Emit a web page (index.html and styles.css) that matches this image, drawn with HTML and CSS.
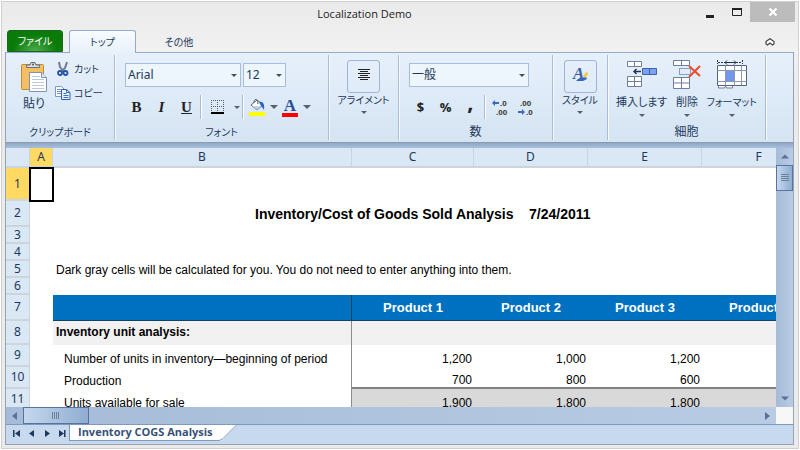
FILE: index.html
```html
<!DOCTYPE html>
<html lang="ja">
<head>
<meta charset="utf-8">
<title>Localization Demo</title>
<link rel="stylesheet" href="styles.css">
</head>
<body>
<div class="window">
  <header class="titlebar">
    <h1 class="title">Localization Demo</h1>
    <div class="window-buttons">
      <button class="win-btn" aria-label="Minimize"><svg width="10" height="12"><path d="M1 9h8v3H1z" fill="#222"/></svg></button>
      <button class="win-btn" aria-label="Maximize"><svg width="10" height="12"><path d="M0.5 3v6.500h9V3" fill="none" stroke="#222"/><path d="M0 2h10v2H0z" fill="#222"/></svg></button>
      <button class="win-btn close" aria-label="Close"><svg width="10" height="10"><path d="M1.500 1.500l7 7M8.500 1.500l-7 7" stroke="#fff" stroke-width="2"/></svg></button>
    </div>
  </header>
  <nav class="tabs">
    <button class="tab file">ファイル</button>
    <button class="tab active">トップ</button>
    <button class="tab other">その他</button>
    <button class="collapse" aria-label="Collapse ribbon"><svg width="10" height="8"><path d="M1 3.500L5 0.700L9 3.500V6L7.500 7L5 5L2.500 7L1 6z" fill="#fff" stroke="#444" stroke-width="1.200"/></svg></button>
  </nav>
  <div class="frame">
    <div class="ribbon">
      <section class="group clipboard">
        <div class="group-body row">
          <button class="big">
            <svg width="28" height="32" viewBox="0 0 28 32">
              <rect x="1.500" y="3.500" width="22" height="25" rx="1" fill="#f3bf62" stroke="#bd8b3d"/>
              <path d="M6.500 6.500V4h3.500l1-2.500h4L16 4h3.500v2.500z" fill="#d8dde3" stroke="#69717b"/>
              <circle cx="13" cy="3.500" r="1" fill="#555"/>
              <path d="M9.500 11.500h12l5 5v14h-17z" fill="#fff" stroke="#7e93b3"/>
              <path d="M21.500 11.500v5h5" fill="#dce8f6" stroke="#7e93b3"/>
              <path d="M12 15.500h8M12 18.500h12M12 21.500h12M12 24.500h12M12 27.500h12" stroke="#b9c8da"/>
            </svg>
            <span>貼り</span>
          </button>
          <div class="stack">
            <button class="small">
              <svg width="16" height="16" viewBox="0 0 16 16">
                <path d="M4 1l1 5 4 5M12 1l-2 6-4 4" fill="none" stroke="#6d7b8e" stroke-width="2"/>
                <circle cx="5" cy="12" r="2" fill="none" stroke="#2451a6" stroke-width="1.800"/>
                <circle cx="10.500" cy="12" r="2" fill="none" stroke="#2451a6" stroke-width="1.800"/>
              </svg><span>カット</span>
            </button>
            <button class="small">
              <svg width="16" height="16" viewBox="0 0 16 16">
                <path d="M.5 1.500h6l3 3v7h-9z" fill="#fff" stroke="#7b98c8"/>
                <path d="M2 4.500h4M2 6.500h4M2 8.500h4" stroke="#6e93d0"/>
                <path d="M6.500 4.500h5l3.500 3v7H6.500z" fill="#e8f1fd" stroke="#2f5fb5"/>
                <path d="M11.500 4.500v3H15M8.500 8.500h3M8.500 10.500h5M8.500 12.500h5" fill="none" stroke="#3c6ec2"/>
              </svg><span>コピー</span>
            </button>
          </div>
        </div>
        <h2 class="group-label">クリップボード</h2>
      </section>

      <section class="group font">
        <div class="group-body">
          <div class="combos">
            <div class="combo family"><select aria-label="フォント名"><option>Arial</option></select></div>
            <div class="combo size"><select aria-label="フォントサイズ"><option>12</option></select></div>
          </div>
          <div class="tools">
            <button class="tool serif" aria-label="Bold">B</button>
            <button class="tool serif italic" aria-label="Italic">I</button>
            <button class="tool serif underline" aria-label="Underline">U</button>
            <i class="divider"></i>
            <button class="tool border-tool" aria-label="Borders"><svg width="14" height="14"><path d="M.5 0v13M6.500 0v13M12.500 0v13M0 .5h13M0 6.500h13" stroke="#555e6b" stroke-dasharray="1 1"/><path d="M0 13h13" stroke="#000" stroke-width="2"/></svg></button>
            <button class="arrow" aria-label="Border options"></button>
            <i class="divider"></i>
            <button class="tool color-tool" aria-label="Fill color"><svg width="18" height="18"><path d="M3 7l6-5 6 5-6 5z" fill="#fff" stroke="#5b6470"/><path d="M6 5c0-5 4-5 4 1" fill="none" stroke="#5b6470"/><path d="M4 8l9 .5L9 12z" fill="#b9cbe2"/><path d="M11 4c4-1 6 2 5 8-1-2-2-3-3-4z" fill="#2865c4"/><path d="M1 14h16v4H1z" fill="#ff0"/></svg></button>
            <button class="arrow wide" aria-label="Fill options"></button>
            <button class="tool color-tool letter" aria-label="Font color"><span>A</span></button>
            <button class="arrow wide" aria-label="Font color options"></button>
          </div>
        </div>
        <h2 class="group-label">フォント</h2>
      </section>

      <section class="group alignment">
        <button class="gallery">
          <span class="gallery-box"><svg width="14" height="14"><path d="M1 1.500h12M3 3.500h8M1 5.500h12M3 7.500h8M1 9.500h12M3 11.500h8" stroke="#222"/></svg></span>
          <span>アライメント</span><i class="caret"></i>
        </button>
      </section>

      <section class="group number">
        <div class="group-body">
          <div class="combos">
            <div class="combo format"><select aria-label="表示形式"><option>一般</option></select></div>
          </div>
          <div class="tools">
            <button class="tool sign">$</button>
            <button class="tool sign">%</button>
            <button class="tool sign comma">,</button>
            <i class="divider"></i>
            <button class="decimal" aria-label="Increase decimal"><svg width="18" height="20"><path d="M1 6l3-3v2h4v2H4v2z" fill="#3b69bd"/><text x="9" y="9">.0</text><text x="5" y="18">.00</text></svg></button>
            <button class="decimal" aria-label="Decrease decimal"><svg width="18" height="20"><text x="3" y="9">.00</text><path d="M8 15l-3-3v2H1v2h4v2z" fill="#3b69bd"/><text x="9" y="18">.0</text></svg></button>
          </div>
        </div>
        <h2 class="group-label">数</h2>
      </section>

      <section class="group style">
        <button class="gallery">
          <span class="gallery-box"><svg width="20" height="24"><text class="style-a" x="3" y="17">A</text><path d="M8 17l5-1 2-3 2 4-4 2H6z" fill="#3568c5"/><path d="M13 14l4-5 1 4-3 3z" fill="#f4c84e"/></svg></span>
          <span>スタイル</span><i class="caret"></i>
        </button>
      </section>

      <section class="group cells">
        <div class="group-body row">
          <button class="cell-btn insert">
            <svg width="32" height="30" viewBox="0 0 32 30">
              <path d="M1.500 1.500h14v5h-14zM8.500 1.500v5M1.500 16.500h14v10h-14zM8.500 16.500v10M1.500 21.500h14" fill="#fff" stroke="#6e7f9b"/>
              <path d="M16.500 8.500h14v6h-14zM23.500 8.500v6" fill="#7ca2ee" stroke="#3c62b0"/>
              <path d="M8 11.500h7M10.500 9L8 11.500l2.500 2.500" fill="none" stroke="#26364f" stroke-width="1.500"/>
            </svg><span>挿入します</span><i class="caret"></i>
          </button>
          <button class="cell-btn delete">
            <svg width="32" height="30" viewBox="0 0 32 30">
              <path d="M2.500.5h16v5h-16zM10.500.5v5M2.500 17.500h16v11h-16zM10.500 17.500v11M2.500 23h16" fill="#fff" stroke="#6e7f9b"/>
              <path d="M8.500 8.500h11v6h-11z" fill="none" stroke="#2450a0" stroke-dasharray="1 1"/>
              <path d="M18 6l11 10M29 6L18 17" stroke="#f04a2e" stroke-width="2"/>
            </svg><span>削除</span><i class="caret"></i>
          </button>
          <button class="cell-btn format-cells">
            <svg width="32" height="30" viewBox="0 0 32 30">
              <path d="M1.500 0v4M26.500 0v4M2 2.500h24" stroke="#26364f" stroke-dasharray="2 1"/><path d="M9 2.500h11M11 .5l-2 2 2 2M18 .5l2 2-2 2" fill="none" stroke="#26364f"/>
              <path d="M2.500 26v2h6l1-2 1 2h6v-2" fill="#fff" stroke="#6e7f9b"/>
              <path d="M1.500 5.500h29v20h-29z" fill="#fff" stroke="#52637f"/>
              <path d="M9.500 5.500v20M18.500 5.500v20M25.500 5.500v20M1.500 10.500h29M1.500 21.500h29" stroke="#8b98ad"/>
              <path d="M10 11h8v10h-8z" fill="#7298ee"/>
            </svg><span>フォーマット</span><i class="caret"></i>
          </button>
        </div>
        <h2 class="group-label">細胞</h2>
      </section>
    </div>

    <main class="workarea">
      <div class="sheet">
        <table>
          <colgroup><col class="c-head"><col class="c-a"><col class="c-b"><col class="c-c"><col class="c-n"><col class="c-n"><col class="c-n"></colgroup>
          <thead><tr><th></th><th class="current">A</th><th>B</th><th>C</th><th>D</th><th>E</th><th>F</th></tr></thead>
          <tbody>
            <tr class="r1"><th class="current">1</th><td class="selected"></td><td colspan="5"></td></tr>
            <tr class="r-tall"><th>2</th><td></td><td colspan="5" class="heading">Inventory/Cost of Goods Sold Analysis &nbsp;&nbsp; 7/24/2011</td></tr>
            <tr class="r-short"><th>3</th><td></td><td colspan="5"></td></tr>
            <tr class="r-short"><th>4</th><td></td><td colspan="5"></td></tr>
            <tr class="r-short"><th>5</th><td></td><td colspan="5">Dark gray cells will be calculated for you. You do not need to enter anything into them.</td></tr>
            <tr class="r-short"><th>6</th><td></td><td colspan="5"></td></tr>
            <tr class="r-tall products"><th>7</th><td></td><td class="label"></td><td>Product 1</td><td>Product 2</td><td>Product 3</td><td>Product 4</td></tr>
            <tr class="section"><th>8</th><td></td><td class="label">Inventory unit analysis:</td><td></td><td></td><td></td><td></td></tr>
            <tr class="data"><th>9</th><td></td><td class="label">Number of units in inventory—beginning of period</td><td>1,200</td><td>1,000</td><td>1,200</td><td></td></tr>
            <tr class="data last"><th>10</th><td></td><td class="label">Production</td><td>700</td><td>800</td><td>600</td><td></td></tr>
            <tr class="data total"><th>11</th><td></td><td class="label">Units available for sale</td><td>1,900</td><td>1,800</td><td>1,800</td><td></td></tr>
          </tbody>
        </table>
      </div>
      <div class="vscroll">
        <button aria-label="Scroll up"><svg width="8" height="5"><path d="M0 4.500L4 .5l4 4z" fill="#5c6f9c"/></svg></button>
        <div class="vthumb"><svg width="8" height="8"><path d="M0 .5h8M0 2.500h8M0 4.500h8M0 6.500h8" stroke="#6b7f95"/></svg></div>
        <button class="end" aria-label="Scroll down"><svg width="8" height="5"><path d="M0 .5h8l-4 4z" fill="#5c6f9c"/></svg></button>
      </div>
    </main>
    <div class="hscroll">
      <button aria-label="Scroll left"><svg width="5" height="8"><path d="M5 0v8L0 4z" fill="#5c6f9c"/></svg></button>
      <div class="hthumb"><svg width="8" height="7"><path d="M.5 0v7M2.500 0v7M4.500 0v7M6.500 0v7" stroke="#6b7f95"/></svg></div>
      <button class="end" aria-label="Scroll right"><svg width="5" height="8"><path d="M0 0v8l5-4z" fill="#5c6f9c"/></svg></button>
      <div class="corner"></div>
    </div>
    <footer class="sheetbar">
      <button aria-label="First sheet"><svg width="8" height="7"><path d="M0 0h1.500v7H0zM7 0v7L2 3.500z" fill="#1e395b"/></svg></button>
      <button aria-label="Previous sheet"><svg width="8" height="7"><path d="M6 0v7L1 3.500z" fill="#1e395b"/></svg></button>
      <button aria-label="Next sheet"><svg width="8" height="7"><path d="M2 0v7l5-3.500z" fill="#1e395b"/></svg></button>
      <button aria-label="Last sheet"><svg width="8" height="7"><path d="M6 0h1.500v7H6zM1 0v7l5-3.500z" fill="#1e395b"/></svg></button>
      <button class="sheet-tab">Inventory COGS Analysis</button>
      <svg class="slant" width="20" height="16"><path d="M0 0h19L4 15.500H0z" fill="#fff"/><path d="M18.500 0L5 13.500Q3 15.500 0 15.500" fill="none" stroke="#7f98bc"/></svg>
    </footer>
  </div>
</div>
</body>
</html>
```
FILE: styles.css
```css
* { box-sizing: border-box; }

body {
  margin: 0;
  padding: 1px;
  background: #fff;
  color: #1e395b;
  font: 12px/16px "Noto Sans", "Noto Sans CJK JP", sans-serif;
  font-feature-settings: "palt";
}

button, select {
  margin: 0;
  padding: 0;
  border: 0;
  background: none;
  color: inherit;
  font: inherit;
  font-feature-settings: inherit;
}

button { display: flex; align-items: center; justify-content: center; }
svg { display: block; flex: none; }
h1, h2 { margin: 0; font-weight: 400; }

.window {
  display: flex;
  flex-direction: column;
  height: calc(100vh - 2px);
  padding: 0 4px 3px 3px;
  border: 1px solid #d0d0d0;
  background: linear-gradient(#eaeaea, #f1f1f1 50px, #ebebeb 90px);
}

/* Title bar */
.titlebar { display: flex; height: 28px; }
.title { flex: 1; padding-left: 28px; color: #222; font: 11px/24px "Open Sans", sans-serif; text-align: center; }
.window-buttons { display: flex; height: 20px; margin-right: -1px; }
.win-btn { width: 27px; }
.win-btn.close { width: 45px; background: #bcbcbc; }

/* Ribbon tabs */
.tabs { display: flex; height: 23px; padding-left: 2px; margin-bottom: -1px; position: relative; font-size: 10px; }
.tab { border: 1px solid transparent; border-radius: 3px 3px 0 0; }
.tab.file {
  width: 56px;
  height: 22px;
  border-color: #17691b;
  background: radial-gradient(ellipse at 50% 110%, #54b054, #087b08 60%);
  color: #fff;
}
.tab.active { width: 67px; margin-left: 6px; border-color: #94abd0; border-bottom: 0; background: linear-gradient(#f8fbff, #e7f0fa); }
.tab.other { width: 60px; margin-left: 13px; }
.collapse { margin-left: auto; width: 48px; }

.frame {
  display: flex;
  flex: 1;
  flex-direction: column;
  min-height: 0;
  border: 1px solid #98a3b1;
  border-top-color: #94abd0;
  background: #c6d9ee;
}

/* Ribbon */
.ribbon {
  display: flex;
  height: 90px;
  background: linear-gradient(#e6f0fb, #d5e4f3);
  border-bottom: 1px solid #8d9bad;
}
.group {
  display: flex;
  flex: none;
  flex-direction: column;
  align-items: stretch;
  margin: 2px 0;
  border-right: 1px solid #aabbd3;
  box-shadow: 1px 0 #f7fbff;
}
.group-body { flex: 1; }
.row { display: flex; }
.group-label { font-size: 10px; line-height: 16px; text-align: center; white-space: nowrap; }
.clipboard { width: 109px; }
.font { width: 214px; }
.alignment { width: 70px; }
.number { width: 154px; }
.style { width: 55px; }
.cells { width: 158px; }
.number .group-label, .cells .group-label { font-size: 12px; }

.clipboard .row { padding: 6px 0 0 12px; }
.big { flex-direction: column; justify-content: flex-start; width: 32px; gap: 3px; }
.stack { display: flex; flex-direction: column; gap: 8px; margin-left: 5px; }
.small { gap: 3px; height: 16px; justify-content: flex-start; white-space: nowrap; font-size: 10px; }

.combos { display: flex; gap: 2px; padding: 8px 0 0 10px; }
.combo { position: relative; height: 24px; }
.combo::after {
  content: "";
  position: absolute;
  right: 4px;
  top: 11px;
  border: 3px solid transparent;
  border-top: 3px solid #454f5b;
  border-bottom: 0;
  pointer-events: none;
}
.combo select {
  appearance: none;
  width: 100%;
  height: 100%;
  padding-left: 2px;
  border: 1px solid #a8bdd9;
  background: #edf5fd;
}
.family { width: 116px; }
.size { width: 43px; }
.format { width: 120px; }

.tools { display: flex; align-items: center; height: 26px; margin-top: 7px; padding-left: 9px; }
.tool { width: 25px; height: 24px; color: #222; }
.serif { font: bold 15px/24px "Liberation Serif", serif; }
.italic { font-style: italic; }
.underline { text-decoration: underline; }
.sign { font: bold 13px/24px "Open Sans", sans-serif; }
.comma { font-size: 22px; padding-bottom: 12px; }
.divider { width: 2px; height: 24px; margin: 0 1px; border-left: 1px solid #aabbd3; background: #fff; }
.border-tool { width: 29px; }
.arrow, .caret { flex: none; width: 9px; }
.arrow::after, .caret {
  content: "";
  width: 0;
  border: 3px solid transparent;
  border-top: 3px solid #596069;
  border-bottom: 0;
}
.arrow.wide::after { border-width: 4px 4px 0; }
.color-tool { width: 24px; }
.letter { color: #264f98; font: bold 17px/15px "Liberation Serif", serif; }
.letter span { width: 16px; border-bottom: 4px solid #f00; }
.decimal { width: 26px; }
.decimal text { font: bold 8px "Liberation Sans", sans-serif; fill: #333; }

.gallery { flex-direction: column; margin-top: 5px; white-space: nowrap; font-size: 10px; }
.gallery-box {
  display: flex;
  justify-content: center;
  padding-top: 7px;
  width: 33px;
  height: 33px;
  margin-bottom: -1px;
  border: 1px solid #9fb5d3;
  border-radius: 3px;
}
.gallery .caret { margin-top: 3px; }
.style .gallery-box { padding-top: 1px; }
.style-a { font: italic bold 17px "Liberation Serif", serif; fill: #3c5f9e; }

.cells .row { padding: 5px 8px 0; justify-content: space-between; }
.cell-btn { flex-direction: column; justify-content: flex-start; white-space: nowrap; font-size: 11px; }
.cell-btn span { margin-top: 4px; }
.cell-btn .caret { margin-top: 4px; }
.format-cells { font-size: 10px; }

/* Worksheet */
.workarea {
  display: flex;
  flex: 1;
  min-height: 0;
  padding-top: 5px;
  background: linear-gradient(#8ea7c8, #a9c0dc 5px);
}
.sheet { flex: 1; min-width: 0; overflow: hidden; background: #fff; }
table { table-layout: fixed; width: 810px; border-collapse: separate; border-spacing: 0; }
.c-head { width: 24px; }
.c-a { width: 23px; }
.c-b { width: 299px; }
.c-c { width: 122px; }
.c-n { width: 114px; }
th {
  padding: 0;
  border-right: 1px solid #cbd3db;
  border-bottom: 2px solid #ccd4dc;
  background: #dae7f5;
  font-weight: 400;
  line-height: 14px;
}
thead tr { height: 20px; }
th.current { background: #ffd961; }
td {
  padding: 0 3px;
  color: #000;
  font: 12px/14px "Liberation Sans", sans-serif;
  vertical-align: bottom;
  white-space: nowrap;
}
.r1 { height: 33px; }
.r-tall { height: 26px; }
.r-short { height: 17px; }
.r-short td { padding-bottom: 1px; }
.section { height: 24px; }
.data { height: 22px; }
.selected { outline: 2px solid #000; outline-offset: -1px; }
.heading { padding: 0 0 6px 202px; font-size: 14px; font-weight: 700; }
.label { border-right: 1px solid #8c8c8c; }
.products td { padding-bottom: 5px; color: #fff; font-size: 13px; font-weight: 700; text-align: center; }
.products td + td { border-bottom: 1px solid #17405f; background: #0070c0; }
.products .label { border-right-color: #17405f; }
.section td { padding-bottom: 6px; font-weight: 700; }
.section td + td { background: #f1f1f1; }
.data td { padding-right: 2px; padding-bottom: 1px; text-align: right; }
.data .label { padding-left: 11px; text-align: left; }
.last .label ~ td { border-bottom: 2px solid #808080; padding-bottom: 0; }
.total .label ~ td { background: #d9d9d9; }

/* Scroll bars */
.vscroll { display: flex; flex-direction: column; width: 17px; background: linear-gradient(90deg, #a5bbd7, #b9cce4); }
.vscroll button { height: 17px; }
.vscroll .end { margin-top: auto; }
.vthumb, .hthumb {
  display: flex;
  align-items: center;
  justify-content: center;
  border: 1px solid #56749f;
}
.vthumb { height: 26px; background: linear-gradient(90deg, #c5d7ed, #8fadd2); }
.hscroll { display: flex; height: 18px; border-bottom: 1px solid #7d99bd; background: linear-gradient(90deg, #a5bbd7, #b9cce4); }
.hscroll button { width: 17px; }
.hthumb { width: 66px; background: linear-gradient(90deg, #c5d7ed, #8fadd2); }
.hscroll .end { margin-left: auto; }
.corner { width: 17px; background: #f7f7f7; }

/* Sheet tabs */
.sheetbar { display: flex; height: 19px; padding-left: 3px; }
.sheetbar button { width: 15px; height: 16px; }
.sheetbar .sheet-tab {
  width: auto;
  padding: 0 5px 2px 8px;
  border: 1px solid #7f98bc;
  border-width: 0 0 1px 1px;
  background: #fff;
  color: #365078;
  font: bold 11px/13px "Open Sans", sans-serif;
}
```
